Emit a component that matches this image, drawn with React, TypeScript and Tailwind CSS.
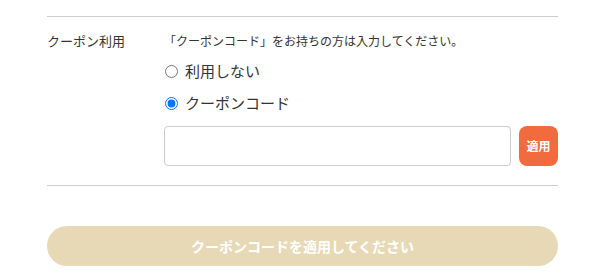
import { useState } from "react";

export default function App() {
  const [mode, setMode] = useState<"none" | "code">("code");
  const [code, setCode] = useState("");

  return (
    <div
      className="w-[600px] h-[278px] bg-white text-[#333]"
      style={{ fontFamily: '"Noto Sans CJK JP", "Noto Sans", sans-serif' }}
    >
      <div className="ml-[47px] w-[511px] pt-[16px]">
        {/* クーポン行 */}
        <div className="flex border-t border-b border-[#cccccc] pt-[15px] pb-[19px]">
          <div className="w-[117px] shrink-0 text-[13px] leading-[18px]">クーポン利用</div>
          <div className="flex-1 flex flex-col">
            <p className="text-[12px] leading-[18px]">「クーポンコード」をお持ちの方は入力してください。</p>

            <label className="flex items-center gap-[7px] mt-[11px] h-[20px] text-[15px] cursor-pointer">
              <input
                type="radio"
                name="coupon"
                className="m-0 ml-[1px] w-[13px] h-[13px]"
                checked={mode === "none"}
                onChange={() => setMode("none")}
              />
              利用しない
            </label>

            <label className="flex items-center gap-[7px] mt-[12px] h-[20px] text-[15px] cursor-pointer">
              <input
                type="radio"
                name="coupon"
                className="m-0 ml-[1px] w-[13px] h-[13px]"
                checked={mode === "code"}
                onChange={() => setMode("code")}
              />
              クーポンコード
            </label>

            <div className="flex items-center gap-[8px] mt-[13px]">
              <input
                type="text"
                value={code}
                onChange={(e) => setCode(e.target.value)}
                className="w-[347px] h-[40px] rounded-[4px] border border-[#cccccc] px-3 text-[14px] outline-none"
              />
              <button className="w-[39px] h-[40px] rounded-[8px] bg-[#f26b3f] text-white text-[12px] font-bold">
                適用
              </button>
            </div>
          </div>
        </div>

        {/* 送信ボタン */}
        <button
          disabled
          className="mt-[40px] w-full h-[40px] rounded-full bg-[#e8d9b6] text-white text-[14px] font-bold"
        >
          クーポンコードを適用してください
        </button>
      </div>
    </div>
  );
}
